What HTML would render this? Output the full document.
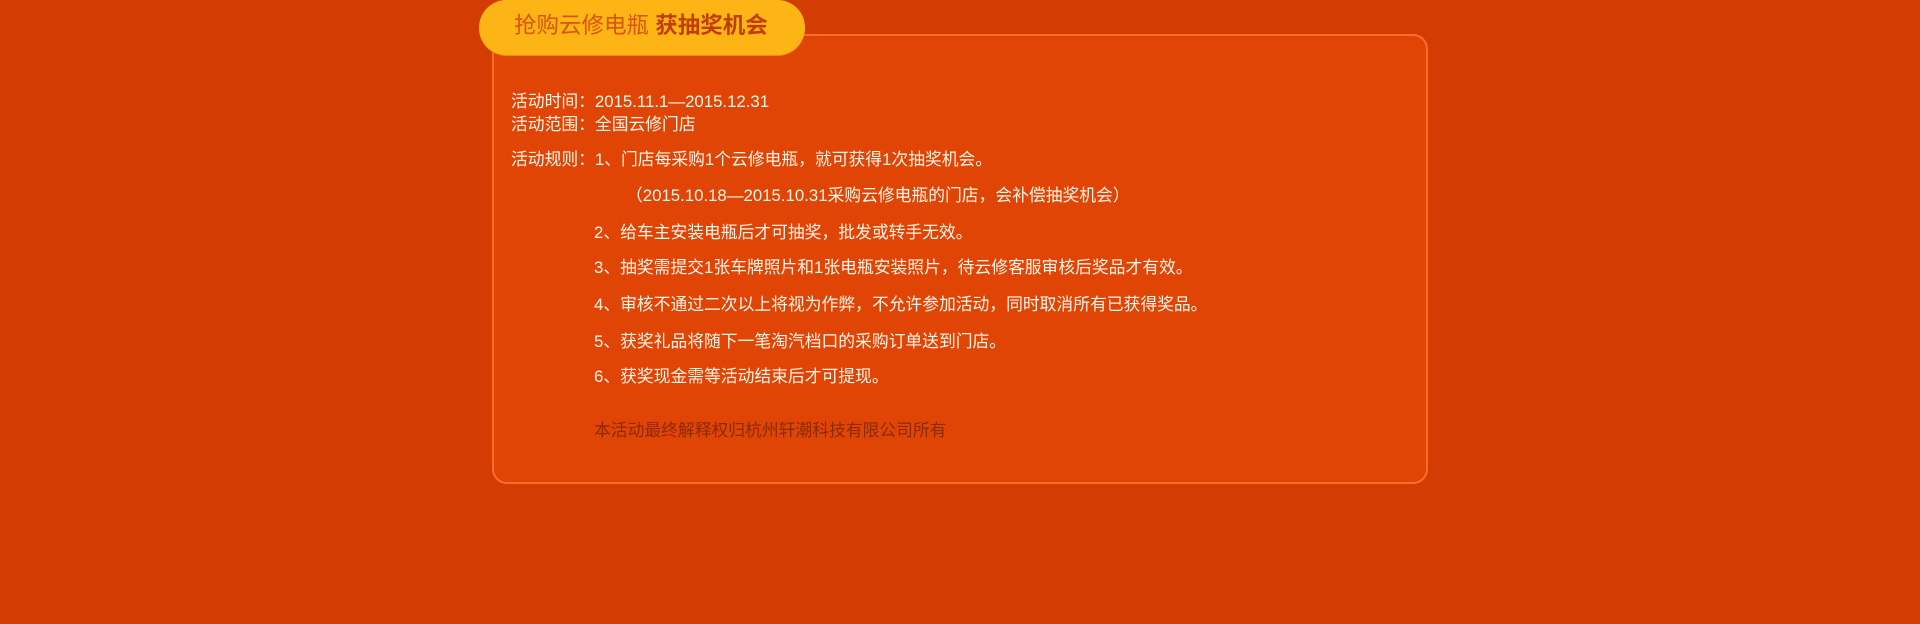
<!DOCTYPE html>
<html><head><meta charset="utf-8"><style>
html,body{margin:0;padding:0}
body{width:1920px;height:624px;background:#d33c03;position:relative;overflow:hidden;font-family:"Liberation Sans","Noto Sans CJK SC",sans-serif;}
.box{position:absolute;left:492px;top:34px;width:932px;height:446px;background:#e04506;border:2px solid #ff6c2c;border-radius:15px;}
.pill{position:absolute;left:479px;top:0;width:326px;height:55px;background:#fdb515;border-radius:28px;box-shadow:0 1px 0 #f08a10;}
.pill span{position:absolute;top:12px;font-size:22.5px;line-height:28px;white-space:nowrap}
.t{position:absolute;color:#fff4e6;font-size:16.8px;line-height:20px;white-space:nowrap}
</style></head><body>
<div class="box"></div>
<div class="pill"><span style="left:35px;color:#d9540e">抢购云修电瓶 <b style="color:#c23c06">获抽奖机会</b></span></div>
<div class="t" style="left:511px;top:92px">活动时间：2015.11.1—2015.12.31</div>
<div class="t" style="left:511px;top:115px">活动范围：全国云修门店</div>
<div class="t" style="left:511px;top:150px">活动规则：1、门店每采购1个云修电瓶，就可获得1次抽奖机会。</div>
<div class="t" style="left:626px;top:186px">（2015.10.18—2015.10.31采购云修电瓶的门店，会补偿抽奖机会）</div>
<div class="t" style="left:594px;top:223px">2、给车主安装电瓶后才可抽奖，批发或转手无效。</div>
<div class="t" style="left:594px;top:258px">3、抽奖需提交1张车牌照片和1张电瓶安装照片，待云修客服审核后奖品才有效。</div>
<div class="t" style="left:594px;top:295px">4、审核不通过二次以上将视为作弊，不允许参加活动，同时取消所有已获得奖品。</div>
<div class="t" style="left:594px;top:332px">5、获奖礼品将随下一笔淘汽档口的采购订单送到门店。</div>
<div class="t" style="left:594px;top:367px">6、获奖现金需等活动结束后才可提现。</div>
<div class="t" style="left:594px;top:421px;color:#8e2a02">本活动最终解释权归杭州轩潮科技有限公司所有</div>
</body></html>
